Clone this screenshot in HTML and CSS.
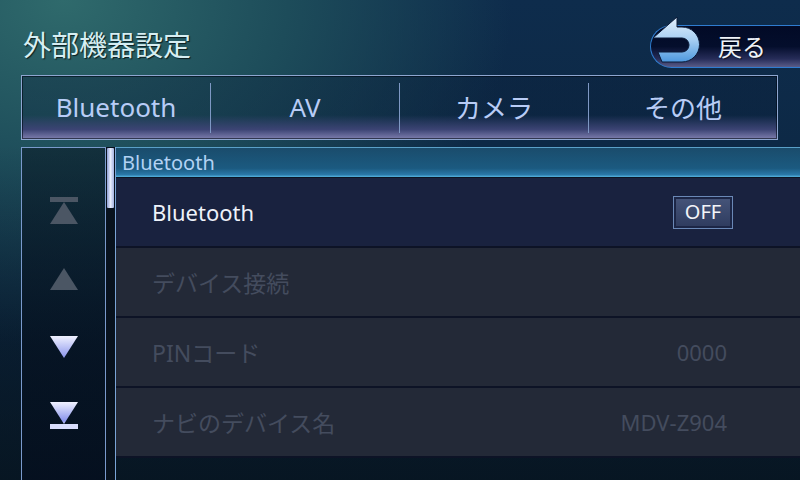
FILE: index.html
```html
<!DOCTYPE html>
<html lang="ja">
<head>
<meta charset="utf-8">
<title>外部機器設定</title>
<link rel="stylesheet" href="styles.css">
</head>
<body>
<div class="screen">
  <header class="topbar">
    <h1 class="title">外部機器設定</h1>
    <button class="back">
      <svg class="back-icon" width="70" height="60" viewBox="0 0 70 60">
        <defs>
          <linearGradient id="ag" x1="0" y1="0" x2="0" y2="1">
            <stop offset="0" stop-color="#e4f0fc"/>
            <stop offset="0.5" stop-color="#a8cff2"/>
            <stop offset="1" stop-color="#4e98de"/>
          </linearGradient>
        </defs>
        <path d="M8,26 L32,5 L32,15 L37,15 A17.5,17.5 0 0 1 37,50 L17,50 L13,40 L37,40 A7,7 0 0 0 37,26 Z" fill="url(#ag)" stroke="#0a1a38" stroke-width="1"/>
      </svg>
      <span class="back-label">戻る</span>
    </button>
  </header>

  <nav class="tabs">
    <div class="tab">Bluetooth</div>
    <div class="sep"></div>
    <div class="tab">AV</div>
    <div class="sep"></div>
    <div class="tab">カメラ</div>
    <div class="sep"></div>
    <div class="tab">その他</div>
  </nav>

  <main class="main">
    <div class="side">
      <svg class="nav-icon" width="28" height="28" viewBox="0 0 28 28">
        <rect x="0" y="0" width="28" height="5" fill="#4b5664"/>
        <polygon points="14,5 28,27 0,27" fill="#4b5664"/>
      </svg>
      <svg class="nav-icon" width="28" height="28" viewBox="0 0 28 28">
        <polygon points="14,3 28,25 0,25" fill="#4b5664"/>
      </svg>
      <svg class="nav-icon" width="28" height="28" viewBox="0 0 28 28">
        <defs>
          <linearGradient id="dg" x1="0" y1="0" x2="0" y2="1">
            <stop offset="0" stop-color="#f0f2ff"/>
            <stop offset="1" stop-color="#8a94ec"/>
          </linearGradient>
        </defs>
        <polygon points="0,3 28,3 14,25" fill="url(#dg)"/>
      </svg>
      <svg class="nav-icon" width="28" height="28" viewBox="0 0 28 28">
        <defs>
          <linearGradient id="dg2" x1="0" y1="0" x2="0" y2="1">
            <stop offset="0" stop-color="#f0f2ff"/>
            <stop offset="0.85" stop-color="#8a94ec"/>
            <stop offset="1" stop-color="#c8ccf8"/>
          </linearGradient>
        </defs>
        <polygon points="0,1 28,1 14,23" fill="url(#dg2)"/>
        <rect x="0" y="23" width="28" height="5" fill="#d8dcfc"/>
      </svg>
    </div>
    <div class="track"><div class="thumb"></div></div>
    <section class="list">
      <div class="list-head">Bluetooth</div>
      <div class="row active">
        <span class="label">Bluetooth</span>
        <span class="toggle">OFF</span>
      </div>
      <div class="row disabled">
        <span class="label">デバイス接続</span>
      </div>
      <div class="row disabled">
        <span class="label">PINコード</span>
        <span class="value">0000</span>
      </div>
      <div class="row disabled">
        <span class="label">ナビのデバイス名</span>
        <span class="value">MDV-Z904</span>
      </div>
    </section>
  </main>
</div>
</body>
</html>
```

FILE: styles.css
```css
* { box-sizing: border-box; }

html, body {
  margin: 0;
  padding: 0;
}

body {
  width: 800px;
  height: 480px;
  overflow: hidden;
  font-family: "Noto Sans", "Noto Sans CJK JP", sans-serif;
  background:
    linear-gradient(to bottom, rgba(4, 12, 22, 0) 30%, rgba(4, 12, 22, 0.55) 100%),
    radial-gradient(ellipse 70% 90% at 8% 0%, #2f6a6c 0%, #1d4c5a 40%, rgba(14, 42, 72, 0) 80%),
    linear-gradient(to bottom, #0e2c4c 0%, #0c2640 60%, #0b2232 100%);
}

.screen {
  display: flex;
  flex-direction: column;
  height: 480px;
}

/* ---------- top bar ---------- */
.topbar {
  height: 75px;
  display: flex;
  justify-content: space-between;
  align-items: flex-start;
}

.title {
  margin: 29px 0 0 23px;
  font-size: 28px;
  line-height: 32px;
  font-weight: normal;
  color: #d6eef2;
  text-shadow: 1px 1px 1px rgba(0, 0, 0, 0.7);
}

.back {
  position: relative;
  margin-top: 25px;
  width: 150px;
  height: 43px;
  padding: 0 0 0 67px;
  border: 1px solid #2f7cd0;
  border-right: none;
  border-radius: 22px 0 0 22px;
  background: linear-gradient(to bottom, #020a26 0%, #040e2c 50%, #262c58 80%, #5a5c88 100%);
  display: flex;
  align-items: center;
  font-family: inherit;
  cursor: pointer;
}

.back-icon {
  position: absolute;
  left: -6px;
  top: -14px;
}

.back-label {
  font-size: 24px;
  line-height: 30px;
  color: #eef2f8;
  text-shadow: 1px 1px 1px rgba(0, 0, 0, 0.6);
}

/* ---------- tabs ---------- */
.tabs {
  margin: 0 22px 0 21px;
  height: 65px;
  border: 1px solid #8ea6d0;
  display: flex;
  background: linear-gradient(to bottom, rgba(10, 30, 56, 0.35) 0%, rgba(10, 30, 56, 0.35) 62%, #3c4474 85%, #7e7eae 100%);
  box-shadow: inset 0 0 0 1px rgba(0, 8, 20, 0.6);
}

.tab {
  flex: 1;
  display: flex;
  align-items: center;
  justify-content: center;
  font-size: 26px;
  color: #b8ccf6;
  padding-bottom: 1px;
}

.sep {
  width: 1px;
  margin: 7px 0 6px;
  background: #7e98c4;
}

/* ---------- main ---------- */
.main {
  margin-top: 7px;
  flex: 1;
  display: flex;
  min-height: 0;
}

.side {
  margin-left: 21px;
  width: 85px;
  border: 1px solid #7a9acc;
  border-bottom: none;
  background: linear-gradient(to bottom, rgba(8, 22, 34, 0.55), rgba(4, 14, 30, 0.75));
  display: flex;
  flex-direction: column;
  align-items: center;
  padding-top: 49px;
  gap: 40px;
}

.nav-icon {
  display: block;
}

.track {
  width: 9px;
  background: #08121e;
  padding: 1px 1px 0 1px;
}

.thumb {
  width: 7px;
  height: 60px;
  background: linear-gradient(to right, #8e9ed4, #e6ecfc 50%, #a4b2e0);
  border-radius: 1px;
}

.list {
  flex: 1;
  border-left: 1px solid #7aa4d6;
  display: flex;
  flex-direction: column;
}

.list-head {
  height: 31px;
  border-top: 1px solid #5aa0c8;
  border-bottom: 1px solid #0c1424;
  background: linear-gradient(to bottom, #1a4c6c 0%, #1b5a80 70%, #2a78a8 92%, #56b4e0 100%);
  color: #b2d2f4;
  font-size: 20px;
  line-height: 30px;
  padding-left: 6px;
}

.row {
  height: 70px;
  border-bottom: 2px solid #0d1326;
  display: flex;
  align-items: center;
  justify-content: space-between;
  padding: 0 73px 0 36px;
  font-size: 22px;
}

.row.active {
  background: #19223f;
  color: #eef2fa;
  padding-right: 67px;
}

.row.disabled {
  background: #232937;
  color: #444c5e;
}

.row.disabled .label {
  font-size: 23px;
}

.toggle {
  width: 60px;
  height: 33px;
  border: 1px solid #6a88b6;
  padding: 2px;
  display: flex;
  background-clip: content-box;
  background-image: linear-gradient(to bottom, #46557a, #2e3b5e);
  align-items: center;
  justify-content: center;
  font-size: 20px;
  color: #f2f4f8;
  line-height: 1;
  box-shadow: inset 0 0 0 2px #1c2646;
}
```
